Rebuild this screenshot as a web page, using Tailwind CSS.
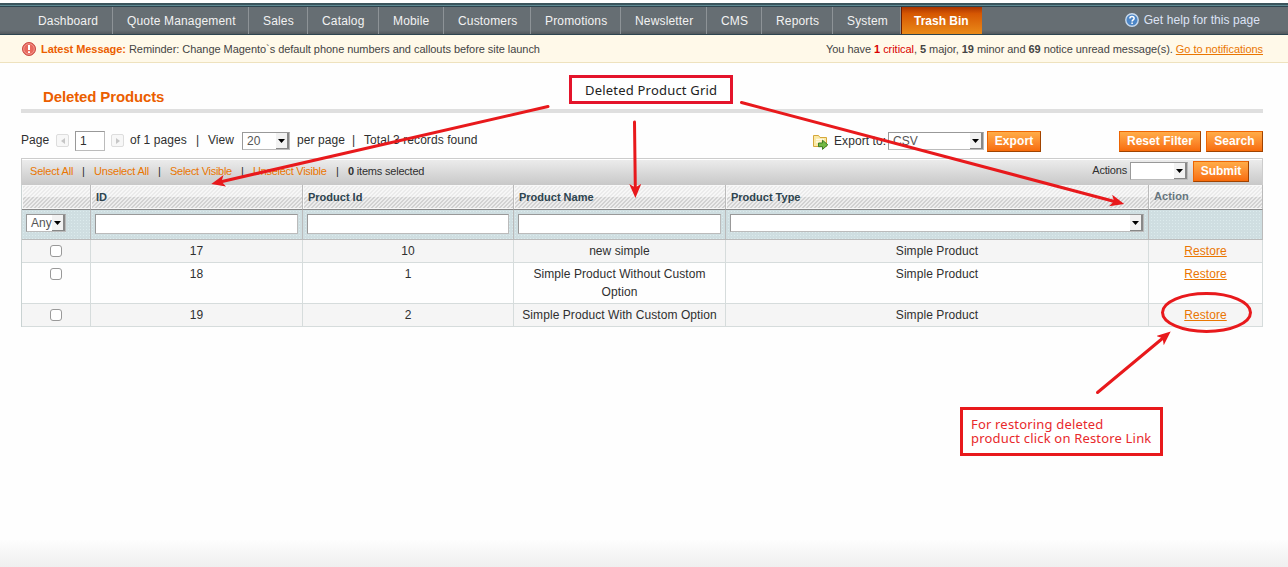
<!DOCTYPE html>
<html lang="en">
<head>
  <meta charset="UTF-8">
  <meta name="viewport" content="width=device-width, initial-scale=1.0">
  <title>Deleted Products</title>
  <script src="https://cdn.jsdelivr.net/npm/@tailwindcss/browser@4"></script>
</head>
<body class="relative h-[567px] overflow-hidden bg-[#fefefe] pt-[3px] font-['Liberation_Sans',Arial,sans-serif] text-xs leading-[18px] tracking-[0.07px] text-[#2f2f2f]">
  <!-- Navigation -->
  <header class="flex h-8 justify-between border-t-2 border-b border-t-[#3a545c] border-b-[#2d444f] bg-[linear-gradient(#5f8a93_0,#5f8a93_1px,#2d444f_1px,#2d444f_2px,#666e73_2px,#666e73_25px,#53595d_29px)] text-[#f2f2f2]">
    <nav class="mt-0.5 flex pl-6 leading-[29px] tracking-[0.16px] whitespace-nowrap">
      <a href="#" class="h-[27px] w-[89px] border-r border-[#8d9397] pl-3.5">Dashboard</a>
      <a href="#" class="h-[27px] w-[136px] border-r border-[#8d9397] pl-3.5">Quote Management</a>
      <a href="#" class="h-[27px] w-[59px] border-r border-[#8d9397] pl-3.5">Sales</a>
      <a href="#" class="h-[27px] w-[71px] border-r border-[#8d9397] pl-3.5">Catalog</a>
      <a href="#" class="h-[27px] w-[65px] border-r border-[#8d9397] pl-3.5">Mobile</a>
      <a href="#" class="h-[27px] w-[87px] border-r border-[#8d9397] pl-3.5">Customers</a>
      <a href="#" class="h-[27px] w-[90px] border-r border-[#8d9397] pl-3.5">Promotions</a>
      <a href="#" class="h-[27px] w-[86px] border-r border-[#8d9397] pl-3.5">Newsletter</a>
      <a href="#" class="h-[27px] w-[55px] border-r border-[#8d9397] pl-3.5">CMS</a>
      <a href="#" class="h-[27px] w-[71px] border-r border-[#8d9397] pl-3.5">Reports</a>
      <a href="#" class="h-[27px] w-[68px] border-r border-[#8d9397] pl-3.5">System</a>
      <a href="#" class="h-[27px] w-[81px] border-l border-[#6b1c00] bg-linear-to-b from-[#a93400] via-[#d65703] via-25% to-[#ea8a18] pl-3 font-bold tracking-normal text-white">Trash Bin</a>
    </nav>
    <a href="#" class="flex items-center pr-7 pt-[3px] pb-0.5 text-[#dde3f5]">
      <svg class="mr-[5px]" width="14" height="14" viewBox="0 0 14 14">
        <circle cx="7" cy="7" r="6.2" fill="#4d86c6" stroke="#c8daee" stroke-width="1.4"/>
        <path d="M4.9 5.5C4.9 2.9 9.1 3 9.1 5.4C9.1 6.9 7.1 6.8 7.1 8.4M7.1 9.5V11" fill="none" stroke="#fff" stroke-width="1.5"/>
      </svg>
      Get help for this page
    </a>
  </header>

  <!-- Notifications -->
  <div class="flex h-7 items-center justify-between border-b border-[#eee2be] bg-[#fff9e9] pr-[25px] pl-[22px] text-[11px] tracking-[-0.045px] text-[#444]">
    <div class="flex items-center">
      <svg class="mr-[5px]" width="14" height="14" viewBox="0 0 14 14">
        <circle cx="7" cy="7" r="6.5" fill="#e2574c" stroke="#c94b43"/>
        <circle cx="7" cy="7" r="5.3" fill="#e9695d" stroke="#f3aaa2" stroke-width=".8"/>
        <path d="M7 3V8M7 9.2V11" stroke="#fff" stroke-width="2"/>
      </svg>
      <p><b class="text-[#eb5e00]">Latest Message:</b> Reminder: Change Magento`s default phone numbers and callouts before site launch</p>
    </div>
    <p>You have <span class="text-[#d90000]"><b>1</b> critical</span>, <b>5</b> major, <b>19</b> minor and <b>69</b> notice unread message(s). <a href="#" class="text-[#ea7601] underline">Go to notifications</a></p>
  </div>

  <main class="mr-[25px] ml-[21px]">
    <div class="mt-[25px] h-[25px] border-b-4 border-[#dfdfdf] pl-[22px]">
      <h1 class="text-[15px] leading-[18px] font-bold tracking-[-0.13px] text-[#eb5e00]">Deleted Products</h1>
    </div>

    <!-- Pager, export and filter buttons -->
    <div class="mt-[18px] flex h-[21px] justify-between whitespace-nowrap">
      <div class="flex items-start">
        <span class="w-[35px]">Page</span>
        <span class="mt-[3px] mr-1.5 flex size-[13px] items-center justify-center rounded-xs border border-[#ddd] bg-[#f7f7f7]">
          <svg width="4" height="6" viewBox="0 0 4 6"><path d="M4 0V6L0 3Z" fill="#c6c6c6"/></svg>
        </span>
        <span class="mr-1.5 h-5 w-[30px] border border-t-[#999] border-r-[#bbb] border-b-[#bbb] border-l-[#999] bg-white pl-1 leading-[19px]">1</span>
        <span class="mt-[3px] mr-1.5 flex size-[13px] items-center justify-center rounded-xs border border-[#ddd] bg-[#f7f7f7]">
          <svg width="4" height="6" viewBox="0 0 4 6"><path d="M0 0V6L4 3Z" fill="#c6c6c6"/></svg>
        </span>
        <span class="w-[65px] pr-px">of 1 pages</span>
        <span class="w-[13px] pl-px">|</span>
        <span class="w-[34px]">View</span>
        <span class="mt-px mr-[7px] flex h-[18px] w-12 justify-between border border-t-[#999] border-r-[#bbb] border-b-[#bbb] border-l-[#999] bg-white pl-1 leading-[17px] text-[#555]">20
          <i class="flex h-4 w-[13px] items-center justify-center border-r-2 border-b border-[#888] bg-[#f2f2f2]"><svg width="7" height="4" viewBox="0 0 7 4"><path d="M0 0H7L3.5 4Z"/></svg></i>
        </span>
        <span class="w-[54px]">per page</span>
        <span class="w-[13px] pl-px">|</span>
        <span>Total 3 records found</span>
      </div>
      <div class="flex items-start">
        <svg class="mt-1 mr-[5px]" width="16" height="15" viewBox="0 0 16 15">
          <path d="M.5 11.5V.5H5.5L7 2.5H13.5V11.5Z" fill="#fbe9a5" stroke="#d5a83c"/>
          <path d="M3 4.5H11M3 7H8" stroke="#fffbe5" stroke-width="1.5"/>
          <path d="M5.5 8H9.5V5.2L14.8 9.8L9.5 14.4V11.7H5.5Z" fill="#73b943" stroke="#3e7d27"/>
        </svg>
        <span class="w-[54px] pt-px">Export to:</span>
        <span class="mt-px mr-[3px] flex h-[18px] w-24 justify-between border border-t-[#999] border-r-[#bbb] border-b-[#bbb] border-l-[#999] bg-white pl-1 leading-[17px] text-[#555]">CSV
          <i class="flex h-4 w-[13px] items-center justify-center border-r-2 border-b border-[#888] bg-[#f2f2f2]"><svg width="7" height="4" viewBox="0 0 7 4"><path d="M0 0H7L3.5 4Z"/></svg></i>
        </span>
        <button class="mr-[78px] h-[21px] w-[54px] border border-t-[#ed6502] border-r-[#a04300] border-b-[#a04300] border-l-[#ed6502] bg-linear-to-b from-[#ffac47] to-[#f76b09] leading-[17px] font-bold text-white">Export</button>
        <button class="mr-[5px] h-[21px] w-[82px] border border-t-[#ed6502] border-r-[#a04300] border-b-[#a04300] border-l-[#ed6502] bg-linear-to-b from-[#ffac47] to-[#f76b09] leading-[17px] font-bold text-white">Reset Filter</button>
        <button class="h-[21px] w-[57px] border border-t-[#ed6502] border-r-[#a04300] border-b-[#a04300] border-l-[#ed6502] bg-linear-to-b from-[#ffac47] to-[#f76b09] leading-[17px] font-bold text-white">Search</button>
      </div>
    </div>

    <!-- Mass actions -->
    <div class="mt-1.5 flex h-[27px] items-start justify-between border border-b-0 border-[#ccc] bg-linear-to-b from-[#ededed] to-[#c8c8c8] pl-2 text-[11px] tracking-[-0.2px] whitespace-nowrap shadow-[inset_0_1px_#fff]">
      <div class="flex pt-[3px]">
        <a href="#" class="w-[52px] text-[#ea7601]">Select All</a>
        <span class="w-3">|</span>
        <a href="#" class="w-16 text-[#ea7601]">Unselect All</a>
        <span class="w-3">|</span>
        <a href="#" class="w-[71px] tracking-[-0.28px] text-[#ea7601]">Select Visible</a>
        <span class="w-3">|</span>
        <a href="#" class="w-[83px] tracking-[-0.28px] text-[#ea7601]">Unselect Visible</a>
        <span class="w-3">|</span>
        <span><b>0</b> items selected</span>
      </div>
      <div class="flex pt-0.5 pr-[13px]">
        <span class="mr-[3px]">Actions</span>
        <span class="mt-px mr-[5px] flex h-[18px] w-[58px] justify-end border border-t-[#999] border-r-[#bbb] border-b-[#bbb] border-l-[#999] bg-white">
          <i class="flex h-4 w-[13px] items-center justify-center border-r-2 border-b border-[#888] bg-[#f2f2f2]"><svg width="7" height="4" viewBox="0 0 7 4"><path d="M0 0H7L3.5 4Z"/></svg></i>
        </span>
        <button class="h-[21px] w-14 border border-t-[#ed6502] border-r-[#a04300] border-b-[#a04300] border-l-[#ed6502] bg-linear-to-b from-[#ffac47] to-[#f76b09] text-xs leading-[17px] font-bold tracking-normal text-white">Submit</button>
      </div>
    </div>

    <!-- Grid -->
    <table class="w-full table-fixed border-separate border-spacing-0 border-l border-[#c9d2d2] text-center">
      <colgroup>
        <col class="w-[69px]"><col class="w-[212px]"><col class="w-[211px]"><col class="w-[212px]"><col class="w-[423px]"><col class="w-[114px]">
      </colgroup>
      <thead class="text-left text-[11px] tracking-normal text-[#2d444f]">
        <tr class="h-[25px] align-top leading-6 [&>th]:border-r [&>th]:border-b [&>th]:border-r-[#bbb] [&>th]:border-b-[#888] [&>th]:bg-[linear-gradient(135deg,#fff9_25%,#fff0_25%,#fff0_50%,#fff9_50%,#fff9_75%,#fff0_75%),linear-gradient(#ebebeb_12px,#d2d2d2_12px)] [&>th]:bg-[length:4px_4px,100%_100%] [&>th]:p-0 [&>th]:pl-[5px] [&>th]:shadow-[inset_1px_1px_#f8f8f8,inset_0_-1px_#f8f8f8]">
          <th></th>
          <th>ID</th>
          <th>Product Id</th>
          <th>Product Name</th>
          <th>Product Type</th>
          <th class="leading-[22px] tracking-[0.1px] text-[#67767e]">Action</th>
        </tr>
        <tr class="h-[30px] bg-[#cfdee1] bg-[radial-gradient(#dcebed_35%,#fff0_40%)] bg-[length:3px_3px] align-top text-xs font-normal text-[#555] [&>td]:border-r [&>td]:border-b [&>td]:border-[#bbb] [&>td]:p-0 [&>td]:pt-1 [&>td]:pr-1 [&>td]:pl-1">
          <td>
            <span class="flex h-[18px] w-10 justify-between border border-t-[#999] border-r-[#bbb] border-b-[#bbb] border-l-[#999] bg-white pl-1 leading-[17px]">Any
              <i class="flex h-4 w-[13px] items-center justify-center border-r-2 border-b border-[#888] bg-[#f2f2f2]"><svg width="7" height="4" viewBox="0 0 7 4"><path d="M0 0H7L3.5 4Z"/></svg></i>
            </span>
          </td>
          <td><input type="text" class="block h-5 w-full border border-t-[#999] border-r-[#bbb] border-b-[#bbb] border-l-[#999] bg-white"></td>
          <td><input type="text" class="block h-5 w-full border border-t-[#999] border-r-[#bbb] border-b-[#bbb] border-l-[#999] bg-white"></td>
          <td><input type="text" class="block h-5 w-full border border-t-[#999] border-r-[#bbb] border-b-[#bbb] border-l-[#999] bg-white"></td>
          <td>
            <span class="flex h-[18px] justify-end border border-t-[#999] border-r-[#bbb] border-b-[#bbb] border-l-[#999] bg-white">
              <i class="flex h-4 w-[13px] items-center justify-center border-r-2 border-b border-[#888] bg-[#f2f2f2]"><svg width="7" height="4" viewBox="0 0 7 4"><path d="M0 0H7L3.5 4Z"/></svg></i>
            </span>
          </td>
          <td></td>
        </tr>
      </thead>
      <tbody class="align-top [&_td]:border-r [&_td]:border-b [&_td]:border-[#d6dcdc] [&_td]:px-1 [&_td]:pt-0.5 [&_td]:pb-0.5">
        <tr class="h-[23px] bg-[#f5f5f5]">
          <td><input type="checkbox" class="mt-[3px] block mx-auto size-3 appearance-none rounded-[3px] border border-[#999] bg-white"></td>
          <td>17</td>
          <td>10</td>
          <td>new simple</td>
          <td>Simple Product</td>
          <td><a href="#" class="text-[#ea7601] underline">Restore</a></td>
        </tr>
        <tr class="h-[41px]">
          <td><input type="checkbox" class="mt-[3px] block mx-auto size-3 appearance-none rounded-[3px] border border-[#999] bg-white"></td>
          <td>18</td>
          <td>1</td>
          <td>Simple Product Without Custom Option</td>
          <td>Simple Product</td>
          <td><a href="#" class="text-[#ea7601] underline">Restore</a></td>
        </tr>
        <tr class="h-[23px] bg-[#f5f5f5]">
          <td><input type="checkbox" class="mt-[3px] block mx-auto size-3 appearance-none rounded-[3px] border border-[#999] bg-white"></td>
          <td>19</td>
          <td>2</td>
          <td>Simple Product With Custom Option</td>
          <td>Simple Product</td>
          <td><a href="#" class="text-[#ea7601] underline">Restore</a></td>
        </tr>
      </tbody>
    </table>
  </main>

  <div class="absolute inset-x-0 bottom-0 h-7 bg-linear-to-b from-[#fefefe] to-[#efefef]"></div>

  <!-- Callouts -->
  <svg class="absolute top-0 left-0" width="1288" height="567" viewBox="0 0 1288 567" fill="none" stroke="#e8191c" stroke-width="3" stroke-linecap="round">
    <defs>
      <marker id="arrow" markerUnits="userSpaceOnUse" markerWidth="16" markerHeight="14" refX="4" refY="6" orient="auto">
        <path d="M0 0L14 6L0 12L3.5 6Z" fill="#e8191c" stroke="none"/>
      </marker>
    </defs>
    <path d="M548 106.500L221 181.700" marker-end="url(#arrow)"/>
    <path d="M634.500 122L635.300 188" marker-end="url(#arrow)"/>
    <path d="M741.500 102.500L1114.500 201.500" marker-end="url(#arrow)"/>
    <path d="M1097.500 392.500L1163 338" marker-end="url(#arrow)"/>
    <ellipse cx="1206.500" cy="312.500" rx="44" ry="19"/>
  </svg>
  <div class="absolute top-[75px] left-[569px] h-[29px] w-[164px] border-3 border-[#e4142b] bg-white pl-[13px] font-['Noto_Sans',sans-serif] text-[13px] leading-6 tracking-[0.2px] whitespace-nowrap text-[#222]">Deleted Product Grid</div>
  <div class="absolute top-[407px] left-[960px] h-[49px] w-[203px] border-3 border-[#e8191c] bg-white pt-[7px] pl-2 font-['Noto_Sans',sans-serif] text-[13px] leading-3.5 tracking-[0.18px] whitespace-nowrap text-[#e8292c]">For restoring deleted<br>product click on Restore Link</div>
</body>
</html>
